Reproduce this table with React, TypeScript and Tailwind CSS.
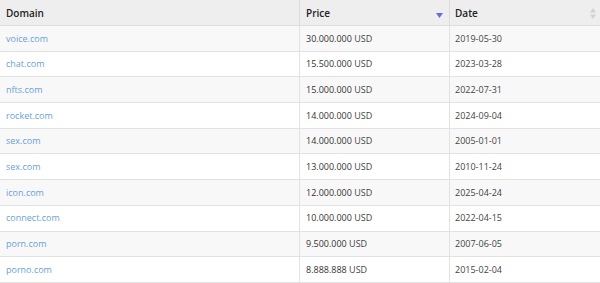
import React from 'react';

interface Sale {
  domain: string;
  price: string;
  date: string;
}

const sales: Sale[] = [
  { domain: 'voice.com', price: '30.000.000', date: '2019-05-30' },
  { domain: 'chat.com', price: '15.500.000', date: '2023-03-28' },
  { domain: 'nfts.com', price: '15.000.000', date: '2022-07-31' },
  { domain: 'rocket.com', price: '14.000.000', date: '2024-09-04' },
  { domain: 'sex.com', price: '14.000.000', date: '2005-01-01' },
  { domain: 'sex.com', price: '13.000.000', date: '2010-11-24' },
  { domain: 'icon.com', price: '12.000.000', date: '2025-04-24' },
  { domain: 'connect.com', price: '10.000.000', date: '2022-04-15' },
  { domain: 'porn.com', price: '9.500.000', date: '2007-06-05' },
  { domain: 'porno.com', price: '8.888.888', date: '2015-02-04' },
];

const App: React.FC = () => {
  return (
    <div className="w-[600px] h-[283px] overflow-hidden bg-white text-[9px] text-[#333]" style={{ fontFamily: '"Open Sans", "Liberation Sans", sans-serif' }}>
      {/* Header */}
      <div className="flex h-[26px] bg-[#eeeeee] border-b border-[#dcdcdc] font-semibold text-[10px] text-[#222]">
        <div className="w-[300px] border-r border-[#dcdcdc] pl-[6px] pt-[1px] flex items-center">Domain</div>
        <div className="w-[150px] border-r border-[#dcdcdc] pl-[6px] pr-[6px] pt-[1px] flex items-center justify-between">
          <span>Price</span>
          <svg width="7" height="5" viewBox="0 0 7 5" className="mt-[4px]">
            <path d="M0 0 L7 0 L3.5 5 Z" fill="#6b6bd6" />
          </svg>
        </div>
        <div className="flex-1 pl-[5px] pr-[4px] pt-[1px] flex items-center justify-between">
          <span>Date</span>
          <svg width="6" height="11" viewBox="0 0 6 11">
            <path d="M0 4.5 L6 4.5 L3 0 Z" fill="#d2d2d2" />
            <path d="M0 6.5 L6 6.5 L3 11 Z" fill="#d2d2d2" />
          </svg>
        </div>
      </div>

      {/* Rows */}
      {sales.map((sale, index) => (
        <div
          key={index}
          className={`flex h-[25.7px] border-b border-[#e2e2e2] ${index % 2 === 0 ? 'bg-[#f8f8f8]' : 'bg-white'}`}
        >
          <div className="w-[300px] border-r border-[#e2e2e2] pl-[6px] flex items-center">
            <a href="#" className="text-[#6a9fd8]">{sale.domain}</a>
          </div>
          <div className="w-[150px] border-r border-[#e2e2e2] pl-[6px] flex items-center">
            {sale.price}&nbsp;<span className="text-[#444]">USD</span>
          </div>
          <div className="flex-1 pl-[5px] flex items-center text-[#444]">{sale.date}</div>
        </div>
      ))}
    </div>
  );
};

export default App;
